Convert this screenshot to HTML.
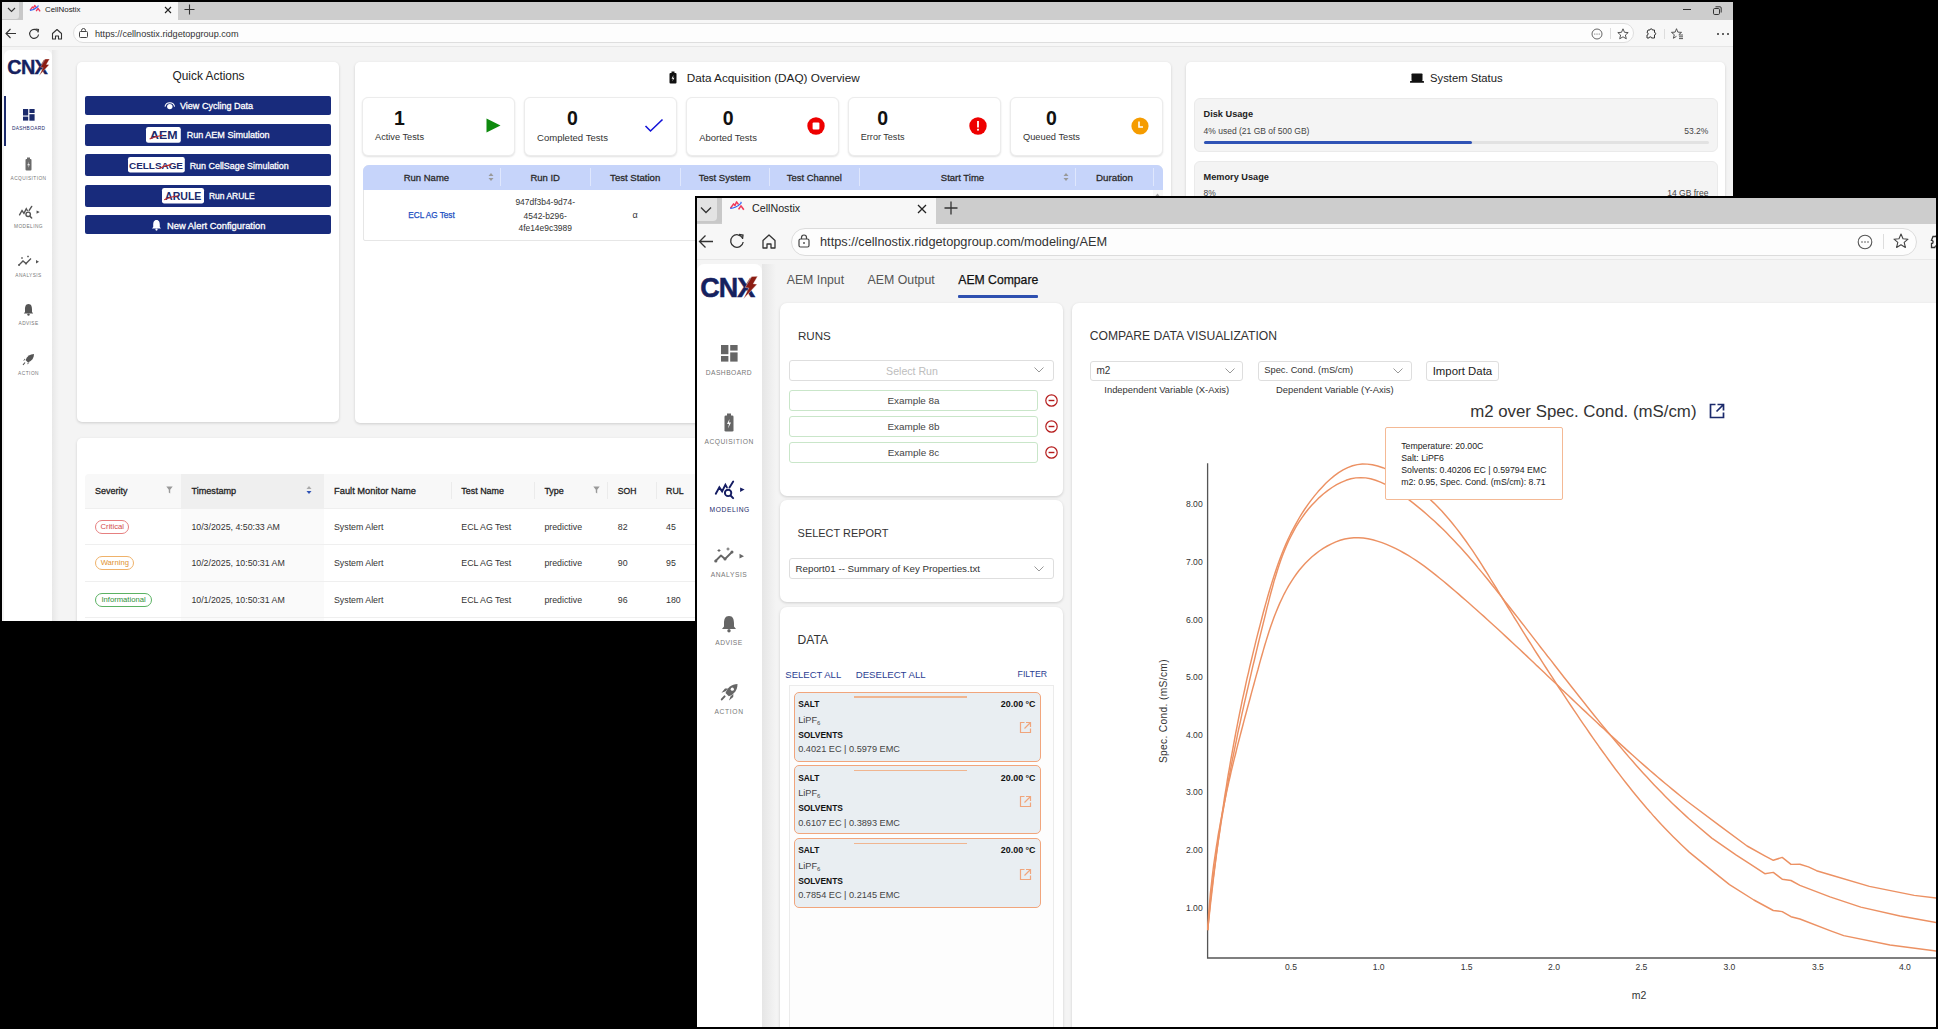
<!DOCTYPE html>
<html><head><meta charset="utf-8">
<style>
*{box-sizing:border-box}
html,body{margin:0;padding:0}
body{width:1938px;height:1029px;background:#000;position:relative;overflow:hidden;font-family:"Liberation Sans",sans-serif;color:#222}
.win{position:absolute;left:0;top:0;width:1938px;height:1029px}
#w1{clip-path:inset(2px 205px 408px 2px)}
#w2o{clip-path:inset(196px 0px 0px 695px)}
#w2{clip-path:inset(198px 2px 2px 697px)}
.a{position:absolute}
.t{position:absolute;white-space:nowrap;line-height:1}
.card{position:absolute;background:#fff;border-radius:5px;box-shadow:0 1px 3px rgba(0,0,0,.16)}
svg{position:absolute;overflow:visible}
</style></head>
<body>
<!-- ================= WINDOW 1 ================= -->
<div class="win" id="w1">
  <div class="a" style="left:0;top:0;width:1938px;height:1029px;background:#f4f4f4"></div>
  <!-- tab bar -->
  <div class="a" style="left:0;top:0;width:1938px;height:20px;background:#cdcdcd"></div>
  <div class="a" style="left:2px;top:2px;width:21px;height:18.5px;background:#c8c8c8;border-radius:0 0 3px 0"></div>
  <div class="a" style="left:2px;top:2px;width:17px;height:16.8px;background:#e3e3e3;border-radius:0 0 3px 0"></div>
  <svg style="left:7px;top:7px" width="9" height="6"><path d="M1 1 L4.5 4.5 L8 1" fill="none" stroke="#333" stroke-width="1.1"/></svg>
  <div class="a" style="left:23px;top:2px;width:155px;height:20px;background:#f7f7f7"></div>
  <svg style="left:29px;top:4px" width="12" height="9" viewBox="0 0 16 12"><path d="M1.5 8.2 L4.6 3.9 L6 5.4 L7.6 1.9 L9.6 4.6" fill="none" stroke="#f03a5a" stroke-width="1.8" stroke-linejoin="round"/><path d="M9.6 9.4 L12 5.9 L14.8 9.8" fill="none" stroke="#f03a5a" stroke-width="1.9" stroke-linejoin="round"/><path d="M1.2 8.4 Q7 8 11.6 3.6 Q12.6 2.3 11.6 2" fill="none" stroke="#2f63f5" stroke-width="1.6"/></svg>
  <div class="t" style="left:45px;top:5.5px;font-size:7.9px;color:#222">CellNostix</div>
  <svg style="left:164px;top:6px" width="8" height="8"><path d="M1 1 L7 7 M7 1 L1 7" stroke="#222" stroke-width="1.1"/></svg>
  <svg style="left:184px;top:4px" width="11" height="11"><path d="M5.5 0.5 V10.5 M0.5 5.5 H10.5" stroke="#333" stroke-width="1.1"/></svg>
  <div class="a" style="left:1683px;top:9px;width:8px;height:1px;background:#333"></div>
  <svg style="left:1713px;top:6px" width="9" height="9"><rect x="0.5" y="2.5" width="6" height="6" rx="1.2" fill="none" stroke="#333" stroke-width="1"/><path d="M2.5 0.8 H7 Q8.2 0.8 8.2 2 V6.5" fill="none" stroke="#333" stroke-width="1"/></svg>
  <!-- address row -->
  <div class="a" style="left:0;top:20px;width:1938px;height:27px;background:#f7f7f7;border-bottom:1px solid #e6e6e6"></div>
  <svg style="left:5px;top:28px" width="12" height="11"><path d="M11 5.5 H1.2 M5.5 1 L1 5.5 L5.5 10" fill="none" stroke="#333" stroke-width="1.1"/></svg>
  <svg style="left:28px;top:28px" width="12" height="12"><path d="M10 3.5 A4.5 4.5 0 1 0 10.6 6.5" fill="none" stroke="#333" stroke-width="1.1"/><path d="M7.5 1 L10.5 1.5 L10 4.5" fill="none" stroke="#333" stroke-width="1.1"/></svg>
  <svg style="left:51px;top:28px" width="12" height="12"><path d="M1.5 11 V5.5 L6 1.5 L10.5 5.5 V11 H7.5 V8 H4.5 V11 Z" fill="none" stroke="#333" stroke-width="1.1" stroke-linejoin="round"/></svg>
  <div class="a" style="left:73px;top:23px;width:1561px;height:20px;background:#fdfdfd;border:1px solid #dedede;border-radius:10px"></div>
  <svg style="left:79px;top:28px" width="9" height="10"><rect x="0.5" y="3.5" width="8" height="6" rx="1" fill="none" stroke="#444" stroke-width="1"/><path d="M2.5 3.5 V2.5 A2 2 0 0 1 6.5 2.5 V3.5" fill="none" stroke="#444" stroke-width="1"/></svg>
  <div class="t" style="left:95px;top:30px;font-size:9.15px;color:#333">https://cellnostix.ridgetopgroup.com</div>
  <svg style="left:1591px;top:28px" width="12" height="12"><circle cx="6" cy="6" r="5" fill="none" stroke="#555" stroke-width="0.9"/><circle cx="3.8" cy="6" r="0.6" fill="#555"/><circle cx="6" cy="6" r="0.6" fill="#555"/><circle cx="8.2" cy="6" r="0.6" fill="#555"/></svg>
  <div class="a" style="left:1610px;top:28px;width:1px;height:11px;background:#ddd"></div>
  <svg style="left:1617px;top:28px" width="12" height="12"><path d="M6 0.8 L7.5 4.3 L11.2 4.6 L8.4 7 L9.3 10.8 L6 8.8 L2.7 10.8 L3.6 7 L0.8 4.6 L4.5 4.3 Z" fill="none" stroke="#444" stroke-width="0.9" stroke-linejoin="round"/></svg>
  <svg style="left:1645px;top:28px" width="12" height="12"><path d="M3 2 H5 A1.2 1.2 0 0 1 7.4 2 H9.5 V4.5 A1.2 1.2 0 0 1 9.5 6.9 V10 H6.5 A1.2 1.2 0 0 0 4.1 10 H2 V7 A1.2 1.2 0 0 0 2 4.6 Z" fill="none" stroke="#333" stroke-width="1"/></svg>
  <div class="a" style="left:1664px;top:29px;width:1px;height:10px;background:#ddd"></div>
  <svg style="left:1671px;top:28px" width="13" height="12"><path d="M7.69 6.71 L10.54 4.36 L6.85 4.14 L5.50 0.70 L4.15 4.14 L0.46 4.36 L3.31 6.71 L2.38 10.29 L5.50 8.30" fill="none" stroke="#444" stroke-width="0.9" stroke-linejoin="round"/><path d="M8 7 H12 M8 8.8 H12 M8 10.6 H12" stroke="#444" stroke-width="0.9"/></svg>
  <svg style="left:1716px;top:32px" width="14" height="4"><circle cx="2" cy="2" r="1" fill="#333"/><circle cx="7" cy="2" r="1" fill="#333"/><circle cx="12" cy="2" r="1" fill="#333"/></svg>

  <!-- W1 CONTENT -->
  
  <!-- sidebar -->
  <div class="a" style="left:52px;top:50px;width:7px;height:600px;background:linear-gradient(90deg,rgba(0,0,0,.05),rgba(0,0,0,0))"></div>
  <div class="a" style="left:4px;top:50px;width:48px;height:600px;background:#fff;border-radius:6px 6px 0 0"></div>
  <svg style="left:7.36px;top:57.5px" width="44.4" height="19.2" viewBox="0 0 60 26"><text x="0.3" y="21.6" font-family="Liberation Sans" font-weight="bold" font-size="26.9" fill="#16215e" stroke="#16215e" stroke-width="0.5" letter-spacing="-0.9">CNX</text><path d="M51.7 1.5 L57.6 1.3 L53.3 8.8 L57.1 9.2 L43.4 23.9 L48.8 13.1 L45.2 12.4 Z" fill="#8c1d12" stroke="#fff" stroke-width="0.4"/></svg>
  <div class="a" style="left:4px;top:96px;width:1.5px;height:50px;background:#1b2a6b"></div>
  <svg style="left:23px;top:109px" width="12" height="12"><rect x="0" y="0" width="5.2" height="6.5" fill="#1b2a6b"/><rect x="6.4" y="0" width="5.2" height="4" fill="#1b2a6b"/><rect x="0" y="7.6" width="5.2" height="4" fill="#1b2a6b"/><rect x="6.4" y="5.2" width="5.2" height="6.5" fill="#1b2a6b"/></svg>
  <div class="t" style="left:12.0px;top:127.2px;font-size:4.8px;letter-spacing:0.32px;color:#1b2a6b">DASHBOARD</div>
  <svg style="left:25px;top:157px" width="7" height="14"><rect x="0.5" y="2" width="6" height="11.5" rx="1" fill="#6a6a6a"/><rect x="2" y="0.5" width="3" height="2" fill="#6a6a6a"/><path d="M4 4.5 L2.3 8.3 H3.8 L3 11 L4.9 7.3 H3.4 Z" fill="#fff"/></svg>
  <div class="t" style="left:10.6px;top:176.9px;font-size:4.8px;letter-spacing:0.43px;color:#777">ACQUISITION</div>
  <svg style="left:17.5px;top:205.5px" width="23" height="14" viewBox="0 0 32 20"><path d="M1.8 12.7 L5.35 6.4 L8.1 10.4 L11.4 3.8 L12.9 6.4 M15.5 6.4 L19.2 0.6" fill="none" stroke="#555" stroke-width="2" stroke-linecap="round"/><circle cx="14.1" cy="11.9" r="3.2" fill="none" stroke="#555" stroke-width="2"/><path d="M16.8 14.8 L19.1 17.1" stroke="#555" stroke-width="2.1" stroke-linecap="round"/><path d="M26.1 6.4 L30.6 8.6 L26.1 10.9 Z" fill="#555"/></svg>
  <div class="t" style="left:14.0px;top:225.4px;font-size:4.8px;letter-spacing:0.43px;color:#777">MODELING</div>
  <svg style="left:18px;top:255px" width="22" height="12"><path d="M1 10 L5 6 L8 8.5 L13 3.5" fill="none" stroke="#555" stroke-width="1.3"/><circle cx="1" cy="10" r="1" fill="#555"/><circle cx="8" cy="8.5" r="1" fill="#555"/><path d="M4 2 V4 M3 3 H5 M10 0.5 V2.5 M9 1.5 H11" stroke="#555" stroke-width=".7"/><path d="M18 5 L21 6.7 L18 8.4 Z" fill="#555"/></svg>
  <div class="t" style="left:15.3px;top:273.8px;font-size:4.8px;letter-spacing:0.41px;color:#777">ANALYSIS</div>
  <svg style="left:23px;top:303px" width="11" height="13"><path d="M5.5 1 C2.5 1 2 4 2 6.5 V9 L0.8 10.5 H10.2 L9 9 V6.5 C9 4 8.5 1 5.5 1 Z" fill="#555"/><circle cx="5.5" cy="11.6" r="1.2" fill="#555"/></svg>
  <div class="t" style="left:18.6px;top:322.3px;font-size:4.8px;letter-spacing:0.38px;color:#777">ADVISE</div>
  <svg style="left:22px;top:353px" width="13" height="13"><path d="M12 1 C8 1 5 3 3.5 7 L6 9.5 C10 8 12 5 12 1 Z" fill="#555"/><path d="M3 7 L1 8 L3 5.5 Z M6 9.5 L5 11.5 L7.5 9.8 Z" fill="#555"/><path d="M3 9.5 L1 12" stroke="#555" stroke-width="1.2"/></svg>
  <div class="t" style="left:18.0px;top:372.1px;font-size:4.8px;letter-spacing:0.49px;color:#777">ACTION</div>

  <!-- Quick actions card -->
  <div class="card" style="left:77px;top:62px;width:262px;height:360px"></div>
  <div class="t" style="left:172.5px;top:71.3px;font-size:11.9px;color:#222">Quick Actions</div>
  <div class="a" style="left:85px;top:96px;width:246px;height:19px;background:#182b7c;border-radius:2px"></div>
  <svg style="left:164px;top:101px" width="12" height="10"><path d="M1 5.6 A4.9 4.9 0 0 1 10.6 5.6" fill="none" stroke="#fff" stroke-width="1.1"/><circle cx="5.8" cy="5.6" r="2.7" fill="#fff"/></svg>
  <div class="t" style="left:180px;top:102.2px;font-size:9.02px;color:#fff;-webkit-text-stroke:0.3px #fff">View Cycling Data</div>
  <div class="a" style="left:85px;top:124px;width:246px;height:21.5px;background:#182b7c;border-radius:2px"></div>
  <svg style="left:146.2px;top:127px" width="34.8" height="15.7"><rect x="0" y="0" width="34.8" height="15.7" rx="2.2" fill="#fff"/><text x="4" y="12.1" font-family="Liberation Sans" font-weight="bold" font-size="11.2" fill="#1b2a6b" textLength="27.5" lengthAdjust="spacingAndGlyphs">AEM</text><path d="M3.6 12 Q9 9.2 17 8.2" fill="none" stroke="#c22a2a" stroke-width="1.1"/></svg>
  <div class="t" style="left:186.7px;top:131.2px;font-size:9.05px;color:#fff;-webkit-text-stroke:0.3px #fff">Run AEM Simulation</div>
  <div class="a" style="left:85px;top:154.4px;width:246px;height:21.8px;background:#182b7c;border-radius:2px"></div>
  <svg style="left:127.7px;top:157.4px" width="56.8" height="15.5"><rect x="0" y="0" width="56.8" height="15.5" rx="2.2" fill="#fff"/><text x="1" y="11.6" font-family="Liberation Sans" font-weight="bold" font-size="9.6" fill="#1b2a6b" textLength="54" lengthAdjust="spacingAndGlyphs">CELLSAGE</text><path d="M31 11.6 Q36 8.6 43.5 7.6" fill="none" stroke="#c22a2a" stroke-width="1.1"/></svg>
  <div class="t" style="left:189.7px;top:161.6px;font-size:8.91px;color:#fff;-webkit-text-stroke:0.3px #fff">Run CellSage Simulation</div>
  <div class="a" style="left:85px;top:185px;width:246px;height:21.5px;background:#182b7c;border-radius:2px"></div>
  <svg style="left:162px;top:188.2px" width="42" height="15.4"><rect x="0" y="0" width="42" height="15.4" rx="2.2" fill="#fff"/><text x="3" y="11.8" font-family="Liberation Sans" font-weight="bold" font-size="10.8" fill="#1b2a6b" textLength="36.4" lengthAdjust="spacingAndGlyphs">ARULE</text><path d="M2.2 11.8 Q8 8.8 16 7.8" fill="none" stroke="#c22a2a" stroke-width="1.1"/></svg>
  <div class="t" style="left:209px;top:192.0px;font-size:8.46px;color:#fff;-webkit-text-stroke:0.3px #fff">Run ARULE</div>
  <div class="a" style="left:85px;top:215.3px;width:246px;height:19.2px;background:#182b7c;border-radius:2px"></div>
  <svg style="left:151px;top:219px" width="11" height="12"><path d="M5.5 1 C2.8 1 2.2 3.5 2.2 6 V8 L1 9.5 H10 L8.8 8 V6 C8.8 3.5 8.2 1 5.5 1 Z" fill="#fff"/><circle cx="5.5" cy="10.6" r="1.1" fill="#fff"/></svg>
  <div class="t" style="left:167px;top:221.3px;font-size:9.4px;color:#fff;-webkit-text-stroke:0.3px #fff">New Alert Configuration</div>

  <!-- DAQ card -->
  <div class="card" style="left:354.5px;top:62px;width:816.5px;height:361px"></div>
  <svg style="left:669px;top:71px" width="8" height="13"><rect x="0.5" y="2" width="7" height="10.5" rx="1" fill="#111"/><rect x="2.5" y="0.5" width="3" height="2" fill="#111"/><path d="M4.5 4 L2.6 7.8 H4 L3.3 10.5 L5.4 6.7 H4 Z" fill="#fff"/></svg>
  <div class="t" style="left:686.7px;top:71.5px;font-size:11.75px;color:#222">Data Acquisition (DAQ) Overview</div>

  <div class="a" style="left:362px;top:97px;width:153.0px;height:59.4px;background:#fff;border:1px solid #ececec;border-radius:6px;box-shadow:0 1px 2px rgba(0,0,0,.12)"></div>
  <div class="t" style="left:359.5px;width:80px;text-align:center;top:109px;font-size:19.5px;font-weight:bold;color:#111">1</div>
  <div class="t" style="left:375.0px;top:133px;font-size:9.22px;color:#333">Active Tests</div>
  <svg style="left:486px;top:118px" width="15" height="15"><path d="M0.5 0.5 L14.5 7.5 L0.5 14.5 Z" fill="#0e8a0e"/></svg>
  <div class="a" style="left:524px;top:97px;width:153.3px;height:59.4px;background:#fff;border:1px solid #ececec;border-radius:6px;box-shadow:0 1px 2px rgba(0,0,0,.12)"></div>
  <div class="t" style="left:532.5px;width:80px;text-align:center;top:109px;font-size:19.5px;font-weight:bold;color:#111">0</div>
  <div class="t" style="left:537.0px;top:133px;font-size:9.56px;color:#333">Completed Tests</div>
  <svg style="left:644px;top:118px" width="20" height="15"><path d="M1.5 8 L6.5 13 L18.5 1.5" fill="none" stroke="#1212d8" stroke-width="1.6"/></svg>
  <div class="a" style="left:686.2px;top:97px;width:153.0px;height:59.4px;background:#fff;border:1px solid #ececec;border-radius:6px;box-shadow:0 1px 2px rgba(0,0,0,.12)"></div>
  <div class="t" style="left:688.1px;width:80px;text-align:center;top:109px;font-size:19.5px;font-weight:bold;color:#111">0</div>
  <div class="t" style="left:699.2px;top:133px;font-size:9.48px;color:#333">Aborted Tests</div>
  <svg style="left:807.0px;top:117px" width="18" height="18"><circle cx="9" cy="9" r="8.7" fill="#ee0000"/><rect x="5.6" y="5.6" width="6.8" height="6.8" rx="1" fill="#fff"/></svg>
  <div class="a" style="left:847.8px;top:97px;width:153.2px;height:59.4px;background:#fff;border:1px solid #ececec;border-radius:6px;box-shadow:0 1px 2px rgba(0,0,0,.12)"></div>
  <div class="t" style="left:842.6px;width:80px;text-align:center;top:109px;font-size:19.5px;font-weight:bold;color:#111">0</div>
  <div class="t" style="left:860.8px;top:133px;font-size:9.07px;color:#333">Error Tests</div>
  <svg style="left:968.6px;top:117px" width="18" height="18"><circle cx="9" cy="9" r="8.7" fill="#ee0000"/><rect x="8.1" y="4" width="1.8" height="6.5" fill="#fff"/><rect x="8.1" y="11.8" width="1.8" height="1.8" fill="#fff"/></svg>
  <div class="a" style="left:1010px;top:97px;width:152.8px;height:59.4px;background:#fff;border:1px solid #ececec;border-radius:6px;box-shadow:0 1px 2px rgba(0,0,0,.12)"></div>
  <div class="t" style="left:1011.5px;width:80px;text-align:center;top:109px;font-size:19.5px;font-weight:bold;color:#111">0</div>
  <div class="t" style="left:1023.0px;top:133px;font-size:9.28px;color:#333">Queued Tests</div>
  <svg style="left:1131px;top:117px" width="18" height="18"><circle cx="9" cy="9" r="8.6" fill="#f59c00"/><path d="M8 4.5 V10 H12" fill="none" stroke="#fff" stroke-width="1.6"/></svg>

  <!-- DAQ table -->
  <div class="a" style="left:363px;top:164.5px;width:799.5px;height:76px;background:#fff;border:1px solid #e6e6e6;border-radius:6px 6px 2px 2px"></div>
  <div class="a" style="left:363px;top:164.5px;width:799.5px;height:25px;background:#c6d4fa;border-radius:6px 6px 0 0"></div>
  <div class="a" style="left:499.7px;top:168px;width:1px;height:18px;background:#dfe7fd"></div>
  <div class="a" style="left:589.7px;top:168px;width:1px;height:18px;background:#dfe7fd"></div>
  <div class="a" style="left:679.7px;top:168px;width:1px;height:18px;background:#dfe7fd"></div>
  <div class="a" style="left:769.3px;top:168px;width:1px;height:18px;background:#dfe7fd"></div>
  <div class="a" style="left:859px;top:168px;width:1px;height:18px;background:#dfe7fd"></div>
  <div class="a" style="left:1075.4px;top:168px;width:1px;height:18px;background:#dfe7fd"></div>
  <div class="a" style="left:1152.5px;top:168px;width:1px;height:18px;background:#dfe7fd"></div>
  <div class="t" style="left:376.4px;width:100px;text-align:center;top:173.1px;font-size:9.52px;color:#2a2a2a;-webkit-text-stroke:0.28px currentColor">Run Name</div>
  <div class="t" style="left:495.2px;width:100px;text-align:center;top:173.1px;font-size:9.52px;color:#2a2a2a;-webkit-text-stroke:0.28px currentColor">Run ID</div>
  <div class="t" style="left:585.2px;width:100px;text-align:center;top:173.1px;font-size:9.61px;color:#2a2a2a;-webkit-text-stroke:0.28px currentColor">Test Station</div>
  <div class="t" style="left:674.7px;width:100px;text-align:center;top:173.1px;font-size:9.50px;color:#2a2a2a;-webkit-text-stroke:0.28px currentColor">Test System</div>
  <div class="t" style="left:764.4px;width:100px;text-align:center;top:173.1px;font-size:9.45px;color:#2a2a2a;-webkit-text-stroke:0.28px currentColor">Test Channel</div>
  <div class="t" style="left:912.5px;width:100px;text-align:center;top:173.1px;font-size:9.51px;color:#2a2a2a;-webkit-text-stroke:0.28px currentColor">Start Time</div>
  <div class="t" style="left:1064.5px;width:100px;text-align:center;top:173.1px;font-size:9.79px;color:#2a2a2a;-webkit-text-stroke:0.28px currentColor">Duration</div>
  <svg style="left:488px;top:172px" width="6" height="10"><path d="M0.5 4 L3 1 L5.5 4 Z M0.5 6 L3 9 L5.5 6 Z" fill="#999"/></svg>
  <svg style="left:1063px;top:172px" width="6" height="10"><path d="M0.5 4 L3 1 L5.5 4 Z M0.5 6 L3 9 L5.5 6 Z" fill="#999"/></svg>
  <div class="t" style="left:381.5px;width:100px;text-align:center;top:212px;font-size:8.2px;color:#1c4fc2;-webkit-text-stroke:0.25px #1c4fc2">ECL AG Test</div>
  <div class="t" style="left:495.2px;width:100px;text-align:center;top:198px;font-size:8.45px;color:#333">947df3b4-9d74-</div>
  <div class="t" style="left:495.2px;width:100px;text-align:center;top:211.5px;font-size:8.45px;color:#333">4542-b296-</div>
  <div class="t" style="left:495.2px;width:100px;text-align:center;top:224.3px;font-size:8.45px;color:#333">4fe14e9c3989</div>
  <div class="t" style="left:585.2px;width:100px;text-align:center;top:211px;font-size:9px;color:#333">α</div>
  <div class="a" style="left:1152.5px;top:189.5px;width:10px;height:50px;background:#f7f7f7"></div>
  <svg style="left:1155px;top:193px" width="5" height="4"><path d="M0 3.5 L2.5 0.5 L5 3.5 Z" fill="#aaa"/></svg>

  <!-- System status -->
  <div class="card" style="left:1186px;top:61.5px;width:539px;height:600px"></div>
  <svg style="left:1410px;top:73px" width="14" height="10"><rect x="1.5" y="0.5" width="11" height="7.5" rx="0.8" fill="#111"/><rect x="0" y="8" width="14" height="1.8" rx="0.6" fill="#111"/></svg>
  <div class="t" style="left:1430px;top:72.5px;font-size:11.26px;color:#222">System Status</div>
  <div class="a" style="left:1193.8px;top:98.3px;width:524px;height:54.2px;background:#f4f4f4;border:1px solid #eaeaea;border-radius:6px"></div>
  <div class="t" style="left:1203.6px;top:110px;font-size:9.18px;font-weight:bold;color:#222">Disk Usage</div>
  <div class="t" style="left:1203.6px;top:127px;font-size:8.5px;color:#444">4% used (21 GB of 500 GB)</div>
  <div class="t" style="left:1608.4px;width:100px;text-align:right;top:127px;font-size:8.5px;color:#444">53.2%</div>
  <div class="a" style="left:1203.6px;top:141px;width:505px;height:2.6px;background:#e2e2e2;border-radius:2px"></div>
  <div class="a" style="left:1203.6px;top:141px;width:268.5px;height:2.6px;background:#2f53b5;border-radius:2px"></div>
  <div class="a" style="left:1193.8px;top:160.5px;width:524px;height:60px;background:#f4f4f4;border:1px solid #eaeaea;border-radius:6px"></div>
  <div class="t" style="left:1203.6px;top:172.8px;font-size:9.18px;font-weight:bold;color:#222">Memory Usage</div>
  <div class="t" style="left:1203.6px;top:189px;font-size:8.5px;color:#444">8%</div>
  <div class="t" style="left:1608.4px;width:100px;text-align:right;top:189px;font-size:8.5px;color:#444">14 GB free</div>

  <!-- Alerts card -->
  <div class="card" style="left:77px;top:437.6px;width:1648px;height:400px"></div>
  <div class="a" style="left:85px;top:473.7px;width:1632px;height:34px;background:#f8f8f8;border-radius:4px 4px 0 0"></div>
  <div class="a" style="left:181px;top:473.7px;width:142.7px;height:34px;background:#efefef"></div>
  <div class="a" style="left:181px;top:507.7px;width:142.7px;height:120px;background:#fafafa"></div>
  <div class="a" style="left:85px;top:507.7px;width:1632px;height:1px;background:#efefef"></div>
  <div class="a" style="left:85px;top:544.3px;width:1632px;height:1px;background:#efefef"></div>
  <div class="a" style="left:85px;top:580.6px;width:1632px;height:1px;background:#efefef"></div>
  <div class="a" style="left:85px;top:617px;width:1632px;height:1px;background:#efefef"></div>
  <div class="a" style="left:450.8px;top:482px;width:1px;height:17px;background:#ebebeb"></div>
  <div class="a" style="left:533.5px;top:482px;width:1px;height:17px;background:#ebebeb"></div>
  <div class="a" style="left:607.2px;top:482px;width:1px;height:17px;background:#ebebeb"></div>
  <div class="a" style="left:655.6px;top:482px;width:1px;height:17px;background:#ebebeb"></div>
  <div class="t" style="left:95.1px;top:487.2px;font-size:8.97px;color:#222;-webkit-text-stroke:0.28px currentColor">Severity</div>
  <div class="t" style="left:191.4px;top:487.2px;font-size:9.13px;color:#222;-webkit-text-stroke:0.28px currentColor">Timestamp</div>
  <div class="t" style="left:334px;top:487.2px;font-size:9.34px;color:#222;-webkit-text-stroke:0.28px currentColor">Fault Monitor Name</div>
  <div class="t" style="left:461.3px;top:487.2px;font-size:8.94px;color:#222;-webkit-text-stroke:0.28px currentColor">Test Name</div>
  <div class="t" style="left:544.4px;top:487.2px;font-size:8.96px;color:#222;-webkit-text-stroke:0.28px currentColor">Type</div>
  <div class="t" style="left:617.8px;top:487.2px;font-size:8.60px;color:#222;-webkit-text-stroke:0.28px currentColor">SOH</div>
  <div class="t" style="left:666px;top:487.2px;font-size:8.84px;color:#222;-webkit-text-stroke:0.28px currentColor">RUL</div>
  <svg style="left:166.0px;top:486px" width="7" height="8"><path d="M0.3 0.5 H6.7 L4.2 3.8 V7.5 L2.8 6.5 V3.8 Z" fill="#999"/></svg>
  <svg style="left:592.8px;top:486px" width="7" height="8"><path d="M0.3 0.5 H6.7 L4.2 3.8 V7.5 L2.8 6.5 V3.8 Z" fill="#999"/></svg>
  <svg style="left:306.4px;top:485px" width="6" height="10"><path d="M0.5 4 L3 1 L5.5 4 Z" fill="#aaa"/><path d="M0.5 6 L3 9 L5.5 6 Z" fill="#2f53b5"/></svg>
  <div class="t" style="left:95.1px;top:519.7px;width:34.4px;height:14.2px;border:1px solid #e68080;border-radius:7px;color:#d24a4a;font-size:7.66px;line-height:12.2px;text-align:center">Critical</div>
  <div class="t" style="left:191.4px;top:523.1px;font-size:8.8px;color:#333">10/3/2025, 4:50:33 AM</div>
  <div class="t" style="left:334px;top:523.1px;font-size:8.8px;color:#333">System Alert</div>
  <div class="t" style="left:461.3px;top:523.1px;font-size:8.8px;color:#333">ECL AG Test</div>
  <div class="t" style="left:544.4px;top:523.1px;font-size:8.8px;color:#333">predictive</div>
  <div class="t" style="left:617.8px;top:523.1px;font-size:8.8px;color:#333">82</div>
  <div class="t" style="left:666px;top:523.1px;font-size:8.8px;color:#333">45</div>
  <div class="t" style="left:95.1px;top:556.0px;width:39.4px;height:14.2px;border:1px solid #efb26a;border-radius:7px;color:#e0922e;font-size:7.66px;line-height:12.2px;text-align:center">Warning</div>
  <div class="t" style="left:191.4px;top:559.4px;font-size:8.8px;color:#333">10/2/2025, 10:50:31 AM</div>
  <div class="t" style="left:334px;top:559.4px;font-size:8.8px;color:#333">System Alert</div>
  <div class="t" style="left:461.3px;top:559.4px;font-size:8.8px;color:#333">ECL AG Test</div>
  <div class="t" style="left:544.4px;top:559.4px;font-size:8.8px;color:#333">predictive</div>
  <div class="t" style="left:617.8px;top:559.4px;font-size:8.8px;color:#333">90</div>
  <div class="t" style="left:666px;top:559.4px;font-size:8.8px;color:#333">95</div>
  <div class="t" style="left:95.1px;top:592.5px;width:56.9px;height:14.2px;border:1px solid #5bb263;border-radius:7px;color:#2f8f3a;font-size:7.66px;line-height:12.2px;text-align:center">Informational</div>
  <div class="t" style="left:191.4px;top:595.9px;font-size:8.8px;color:#333">10/1/2025, 10:50:31 AM</div>
  <div class="t" style="left:334px;top:595.9px;font-size:8.8px;color:#333">System Alert</div>
  <div class="t" style="left:461.3px;top:595.9px;font-size:8.8px;color:#333">ECL AG Test</div>
  <div class="t" style="left:544.4px;top:595.9px;font-size:8.8px;color:#333">predictive</div>
  <div class="t" style="left:617.8px;top:595.9px;font-size:8.8px;color:#333">96</div>
  <div class="t" style="left:666px;top:595.9px;font-size:8.8px;color:#333">180</div>
  <div id="w1c"></div>
</div>

<!-- ================= WINDOW 2 ================= -->
<div class="win" id="w2o"><div class="a" style="left:0;top:0;width:1938px;height:1029px;background:#000"></div>
<div class="win" id="w2">
  <div class="a" style="left:0;top:0;width:1938px;height:1029px;background:#f4f4f4"></div>
  <div class="a" style="left:0;top:198px;width:1938px;height:26px;background:#cdcdcd"></div>
  <div class="a" style="left:697px;top:198px;width:25.7px;height:25.2px;background:#c8c8c8;border-radius:0 0 4px 0"></div>
  <div class="a" style="left:697px;top:198px;width:20.3px;height:22.7px;background:#e3e3e3;border-radius:0 0 4px 0"></div>
  <svg style="left:700px;top:206px" width="12" height="8"><path d="M1 1.5 L6 6.5 L11 1.5" fill="none" stroke="#333" stroke-width="1.3"/></svg>
  <div class="a" style="left:722px;top:198px;width:214px;height:27px;background:#f7f7f7"></div>
  <svg style="left:729px;top:200px" width="16" height="12"><path d="M1.5 8.2 L4.6 3.9 L6 5.4 L7.6 1.9 L9.6 4.6" fill="none" stroke="#f03a5a" stroke-width="1.5" stroke-linejoin="round"/><path d="M9.6 9.4 L12 5.9 L14.8 9.8" fill="none" stroke="#f03a5a" stroke-width="1.6" stroke-linejoin="round"/><path d="M1.2 8.4 Q7 8 11.6 3.6 Q12.6 2.3 11.6 2" fill="none" stroke="#2f63f5" stroke-width="1.3"/></svg>
  <div class="t" style="left:752px;top:203.3px;font-size:10.7px;color:#222">CellNostix</div>
  <svg style="left:917px;top:204px" width="10" height="10"><path d="M1 1 L9 9 M9 1 L1 9" stroke="#222" stroke-width="1.3"/></svg>
  <svg style="left:944px;top:201px" width="14" height="14"><path d="M7 0.5 V13.5 M0.5 7 H13.5" stroke="#333" stroke-width="1.3"/></svg>
  <div class="a" style="left:0;top:224px;width:1938px;height:35.5px;background:#f7f7f7;border-bottom:1px solid #e8e8e8"></div>
  <svg style="left:698px;top:234px" width="16" height="15"><path d="M15 7.5 H1.5 M7.5 1.5 L1.5 7.5 L7.5 13.5" fill="none" stroke="#333" stroke-width="1.3"/></svg>
  <svg style="left:729px;top:233px" width="16" height="16"><path d="M13.5 5 A6.3 6.3 0 1 0 14.2 9" fill="none" stroke="#333" stroke-width="1.3"/><path d="M10 1.5 L14 2 L13.5 6" fill="none" stroke="#333" stroke-width="1.3"/></svg>
  <svg style="left:761px;top:233px" width="16" height="16"><path d="M2 15 V7.5 L8 2 L14 7.5 V15 H10 V11 H6 V15 Z" fill="none" stroke="#333" stroke-width="1.3" stroke-linejoin="round"/></svg>
  <div class="a" style="left:790.5px;top:228px;width:1126.5px;height:27.8px;background:#fdfdfd;border:1px solid #dcdcdc;border-radius:14px"></div>
  <svg style="left:798px;top:234px" width="12" height="14"><rect x="1" y="5" width="10" height="8" rx="1.5" fill="none" stroke="#444" stroke-width="1.2"/><path d="M3.5 5 V3.5 A2.5 2.5 0 0 1 8.5 3.5 V5" fill="none" stroke="#444" stroke-width="1.2"/><circle cx="6" cy="9" r="0.9" fill="#444"/></svg>
  <div class="t" style="left:820px;top:235.8px;font-size:12.75px;color:#333">https://cellnostix.ridgetopgroup.com/modeling/AEM</div>
  <svg style="left:1857px;top:234px" width="16" height="16"><circle cx="8" cy="8" r="6.8" fill="none" stroke="#555" stroke-width="1.1"/><circle cx="5" cy="8" r="0.8" fill="#555"/><circle cx="8" cy="8" r="0.8" fill="#555"/><circle cx="11" cy="8" r="0.8" fill="#555"/></svg>
  <div class="a" style="left:1883px;top:234px;width:1px;height:15px;background:#ddd"></div>
  <svg style="left:1893px;top:233px" width="16" height="16"><path d="M8 1 L10 5.8 L15 6.2 L11.2 9.4 L12.4 14.5 L8 11.8 L3.6 14.5 L4.8 9.4 L1 6.2 L6 5.8 Z" fill="none" stroke="#444" stroke-width="1.1" stroke-linejoin="round"/></svg>

  <svg style="left:1929px;top:234px" width="16" height="16"><path d="M4 2.5 H7 A1.6 1.6 0 0 1 10.2 2.5 H13 V6 A1.6 1.6 0 0 1 13 9.2 V13.5 H9 A1.6 1.6 0 0 0 5.8 13.5 H2.5 V9.5 A1.6 1.6 0 0 0 2.5 6.3 Z" fill="none" stroke="#333" stroke-width="1.3"/></svg>
  <!-- W2 CONTENT -->

  <!-- sidebar -->
  <div class="a" style="left:762px;top:263.6px;width:14px;height:800px;background:linear-gradient(90deg,rgba(0,0,0,.06),rgba(0,0,0,.0))"></div>
  <div class="a" style="left:697px;top:263.6px;width:65px;height:800px;background:#fff;border-radius:7px 7px 0 0"></div>
  <svg style="left:700px;top:275px" width="60" height="26" viewBox="0 0 60 26"><text x="0.3" y="21.6" font-family="Liberation Sans" font-weight="bold" font-size="26.9" fill="#16215e" stroke="#16215e" stroke-width="0.5" letter-spacing="-0.9">CNX</text><path d="M51.7 1.5 L57.6 1.3 L53.3 8.8 L57.1 9.2 L43.4 23.9 L48.8 13.1 L45.2 12.4 Z" fill="#8c1d12" stroke="#fff" stroke-width="0.4"/></svg>
  <svg style="left:720.6px;top:345px" width="17" height="17"><rect x="0" y="0" width="7.4" height="9.2" fill="#666"/><rect x="9.2" y="0" width="7.4" height="5.6" fill="#666"/><rect x="0" y="11" width="7.4" height="5.6" fill="#666"/><rect x="9.2" y="7.4" width="7.4" height="9.2" fill="#666"/></svg>
  <div class="t" style="left:705.8px;top:370.3px;font-size:6.7px;letter-spacing:0.44px;color:#777">DASHBOARD</div>
  <svg style="left:724px;top:412.5px" width="10" height="19"><rect x="0.5" y="2.5" width="9" height="16" rx="1.3" fill="#666"/><rect x="3" y="0.5" width="4" height="2.5" fill="#666"/><path d="M5.5 6 L3 11 H5 L4 15.5 L7 9.5 H5 Z" fill="#fff"/></svg>
  <div class="t" style="left:704.4px;top:438.8px;font-size:6.7px;letter-spacing:0.54px;color:#777">ACQUISITION</div>
  <svg style="left:714px;top:481px" width="32" height="20"><path d="M1.8 12.7 L5.35 6.4 L8.1 10.4 L11.4 3.8 L12.9 6.4 M15.5 6.4 L19.2 0.6" fill="none" stroke="#141c62" stroke-width="1.9" stroke-linecap="round" stroke-linejoin="miter"/><circle cx="14.1" cy="11.9" r="3.2" fill="none" stroke="#141c62" stroke-width="1.9"/><path d="M16.8 14.8 L19.1 17.1" stroke="#141c62" stroke-width="2" stroke-linecap="round"/><path d="M26.1 6.4 L30.6 8.6 L26.1 10.9 Z" fill="#141c62"/></svg>
  <div class="t" style="left:709.6px;top:506.5px;font-size:6.7px;letter-spacing:0.57px;color:#1b2a6b">MODELING</div>
  <svg style="left:714px;top:547px" width="32" height="17"><path d="M1.5 14 L7 8.5 L11 12 L18 5" fill="none" stroke="#666" stroke-width="1.8" stroke-linejoin="round"/><circle cx="1.8" cy="14" r="1.6" fill="#666"/><circle cx="11" cy="12" r="1.5" fill="#666"/><circle cx="18" cy="5" r="1.5" fill="#666"/><path d="M5 2 V5 M3.5 3.5 H6.5 M14 0.5 V3.5 M12.5 2 H15.5" stroke="#666" stroke-width="1"/><path d="M25.5 6.8 L30 9.2 L25.5 11.6 Z" fill="#666"/></svg>
  <div class="t" style="left:710.7px;top:572.3px;font-size:6.7px;letter-spacing:0.56px;color:#777">ANALYSIS</div>
  <svg style="left:721px;top:614.5px" width="16" height="18"><path d="M8 1 C4 1 3 4.5 3 8.5 V11.5 L1 14 H15 L13 11.5 V8.5 C13 4.5 12 1 8 1 Z" fill="#666"/><circle cx="8" cy="15.8" r="1.7" fill="#666"/></svg>
  <div class="t" style="left:715.3px;top:640.0px;font-size:6.7px;letter-spacing:0.48px;color:#777">ADVISE</div>
  <svg style="left:719.5px;top:682.5px" width="19" height="19"><path d="M17.5 1 C11.5 1 7.5 4.5 5.5 10 L8.8 13.3 C14.3 11.3 17.5 7 17.5 1 Z" fill="#666"/><path d="M5.6 8.2 L1.5 9.8 L5 5.6 L8 5.4 Z M10.6 13.2 L9 17.5 L13.2 14 L13.4 11 Z" fill="#666"/><path d="M4.6 13.4 L1.8 16.4" stroke="#666" stroke-width="2" stroke-linecap="round"/><circle cx="12.3" cy="6.2" r="1.6" fill="#fff"/></svg>
  <div class="t" style="left:714.5px;top:708.8px;font-size:6.7px;letter-spacing:0.66px;color:#777">ACTION</div>

  <!-- tabs -->
  <div class="t" style="left:786.7px;top:274.3px;font-size:12.3px;color:#555">AEM Input</div>
  <div class="t" style="left:867.5px;top:274.3px;font-size:12.35px;color:#555">AEM Output</div>
  <div class="t" style="left:958.3px;top:274.3px;font-size:12.2px;color:#111;-webkit-text-stroke:0.25px #111">AEM Compare</div>
  <div class="a" style="left:958.3px;top:295px;width:80px;height:3px;background:#2e50b0;border-radius:1px"></div>

  <!-- RUNS card -->
  <div class="card" style="left:780px;top:303px;width:283px;height:192.5px;border-radius:7px"></div>
  <div class="t" style="left:797.9px;top:330px;font-size:11.6px;color:#333">RUNS</div>
  <div class="a" style="left:789.3px;top:360.4px;width:264.6px;height:20.3px;border:1px solid #dedede;border-radius:3px;background:#fff"></div>
  <div class="t" style="left:862px;width:100px;text-align:center;top:365.9px;font-size:10.6px;color:#bdbdbd">Select Run</div>
  <svg style="left:1034px;top:367px" width="10" height="6"><path d="M0.5 0.5 L5 5 L9.5 0.5" fill="none" stroke="#999" stroke-width="1"/></svg>
  <div class="a" style="left:789.3px;top:390.2px;width:248.3px;height:21.0px;border:1px solid #c9e6c9;border-radius:3px;background:#fff"></div>
  <div class="t" style="left:863.5px;width:100px;text-align:center;top:396.2px;font-size:9.9px;color:#444">Example 8a</div>
  <svg style="left:1044.8px;top:394.2px" width="13" height="13"><circle cx="6.5" cy="6.5" r="5.7" fill="none" stroke="#b51c1c" stroke-width="1.2"/><path d="M3.6 6.5 H9.4" stroke="#b51c1c" stroke-width="1.4"/></svg>
  <div class="a" style="left:789.3px;top:416.1px;width:248.3px;height:21.4px;border:1px solid #c9e6c9;border-radius:3px;background:#fff"></div>
  <div class="t" style="left:863.5px;width:100px;text-align:center;top:422.3px;font-size:9.9px;color:#444">Example 8b</div>
  <svg style="left:1044.8px;top:420.3px" width="13" height="13"><circle cx="6.5" cy="6.5" r="5.7" fill="none" stroke="#b51c1c" stroke-width="1.2"/><path d="M3.6 6.5 H9.4" stroke="#b51c1c" stroke-width="1.4"/></svg>
  <div class="a" style="left:789.3px;top:442.4px;width:248.3px;height:21.0px;border:1px solid #c9e6c9;border-radius:3px;background:#fff"></div>
  <div class="t" style="left:863.5px;width:100px;text-align:center;top:448.4px;font-size:9.9px;color:#444">Example 8c</div>
  <svg style="left:1044.8px;top:446.4px" width="13" height="13"><circle cx="6.5" cy="6.5" r="5.7" fill="none" stroke="#b51c1c" stroke-width="1.2"/><path d="M3.6 6.5 H9.4" stroke="#b51c1c" stroke-width="1.4"/></svg>

  <!-- SELECT REPORT card -->
  <div class="card" style="left:780px;top:500.2px;width:283px;height:101.6px;border-radius:7px"></div>
  <div class="t" style="left:797.6px;top:528.1px;font-size:10.94px;color:#333">SELECT REPORT</div>
  <div class="a" style="left:789.4px;top:558.4px;width:264.6px;height:20.4px;border:1px solid #dedede;border-radius:3px;background:#fff"></div>
  <div class="t" style="left:795.5px;top:563.8px;font-size:9.78px;color:#333">Report01 -- Summary of Key Properties.txt</div>
  <svg style="left:1034px;top:565.5px" width="10" height="6"><path d="M0.5 0.5 L5 5 L9.5 0.5" fill="none" stroke="#999" stroke-width="1"/></svg>

  <!-- DATA card -->
  <div class="card" style="left:780px;top:606.7px;width:283px;height:500px;border-radius:7px"></div>
  <div class="t" style="left:797.6px;top:633.5px;font-size:12.1px;color:#333">DATA</div>
  <div class="t" style="left:785.3px;top:669.8px;font-size:9.53px;color:#2b3d92">SELECT ALL</div>
  <div class="t" style="left:855.7px;top:669.8px;font-size:9.64px;color:#2b3d92">DESELECT ALL</div>
  <div class="t" style="left:1017.6px;top:669.8px;font-size:8.75px;color:#2b3d92">FILTER</div>
  <div class="a" style="left:789.3px;top:684.7px;width:264.7px;height:500px;border:1px solid #ebebeb;background:#fdfdfd"></div>
  <div class="a" style="left:793.5px;top:691.7px;width:247.1px;height:70.0px;border:1px solid #f1a57c;border-radius:5px;background:#e9eef2"></div>
  <div class="a" style="left:853.5px;top:696px;width:113.2px;height:1.5px;background:#f0b590"></div>
  <div class="t" style="left:798.2px;top:700.0px;font-size:8.4px;font-weight:bold;color:#111">SALT</div>
  <div class="t" style="left:935.5px;width:100px;text-align:right;top:700.0px;font-size:8.9px;font-weight:bold;color:#111">20.00 °C</div>
  <div class="t" style="left:798.2px;top:715.5px;font-size:9.2px;color:#444">LiPF<span style="font-size:6px;vertical-align:-2px">6</span></div>
  <div class="t" style="left:798.2px;top:730.7px;font-size:8.43px;font-weight:bold;color:#111">SOLVENTS</div>
  <div class="t" style="left:798.2px;top:745.1px;font-size:9.19px;color:#444">0.4021 EC | 0.5979 EMC</div>
  <svg style="left:1019px;top:721.2px" width="13" height="13"><path d="M5.5 1.5 H1.5 V11.5 H11.5 V7.5" fill="none" stroke="#f0a57c" stroke-width="1.2"/><path d="M7 1.5 H11.5 V6 M11.5 1.5 L5.5 7.5" fill="none" stroke="#f0a57c" stroke-width="1.2"/></svg>
  <div class="a" style="left:793.5px;top:765.2px;width:247.1px;height:69.3px;border:1px solid #f1a57c;border-radius:5px;background:#e9eef2"></div>
  <div class="a" style="left:853.5px;top:769.5px;width:113.2px;height:1.5px;background:#f0b590"></div>
  <div class="t" style="left:798.2px;top:773.5px;font-size:8.4px;font-weight:bold;color:#111">SALT</div>
  <div class="t" style="left:935.5px;width:100px;text-align:right;top:773.5px;font-size:8.9px;font-weight:bold;color:#111">20.00 °C</div>
  <div class="t" style="left:798.2px;top:789.0px;font-size:9.2px;color:#444">LiPF<span style="font-size:6px;vertical-align:-2px">6</span></div>
  <div class="t" style="left:798.2px;top:804.2px;font-size:8.43px;font-weight:bold;color:#111">SOLVENTS</div>
  <div class="t" style="left:798.2px;top:818.6px;font-size:9.19px;color:#444">0.6107 EC | 0.3893 EMC</div>
  <svg style="left:1019px;top:794.7px" width="13" height="13"><path d="M5.5 1.5 H1.5 V11.5 H11.5 V7.5" fill="none" stroke="#f0a57c" stroke-width="1.2"/><path d="M7 1.5 H11.5 V6 M11.5 1.5 L5.5 7.5" fill="none" stroke="#f0a57c" stroke-width="1.2"/></svg>
  <div class="a" style="left:793.5px;top:838px;width:247.1px;height:69.5px;border:1px solid #f1a57c;border-radius:5px;background:#e9eef2"></div>
  <div class="a" style="left:853.5px;top:842.5px;width:113.2px;height:1.5px;background:#f0b590"></div>
  <div class="t" style="left:798.2px;top:846.3px;font-size:8.4px;font-weight:bold;color:#111">SALT</div>
  <div class="t" style="left:935.5px;width:100px;text-align:right;top:846.3px;font-size:8.9px;font-weight:bold;color:#111">20.00 °C</div>
  <div class="t" style="left:798.2px;top:861.8px;font-size:9.2px;color:#444">LiPF<span style="font-size:6px;vertical-align:-2px">6</span></div>
  <div class="t" style="left:798.2px;top:877.0px;font-size:8.43px;font-weight:bold;color:#111">SOLVENTS</div>
  <div class="t" style="left:798.2px;top:891.4px;font-size:9.19px;color:#444">0.7854 EC | 0.2145 EMC</div>
  <svg style="left:1019px;top:867.5px" width="13" height="13"><path d="M5.5 1.5 H1.5 V11.5 H11.5 V7.5" fill="none" stroke="#f0a57c" stroke-width="1.2"/><path d="M7 1.5 H11.5 V6 M11.5 1.5 L5.5 7.5" fill="none" stroke="#f0a57c" stroke-width="1.2"/></svg>

  <!-- Chart card -->
  <div class="card" style="left:1072.2px;top:302.9px;width:900px;height:800px;border-radius:7px"></div>
  <div class="t" style="left:1089.7px;top:330px;font-size:12.15px;color:#333">COMPARE DATA VISUALIZATION</div>
  <div class="a" style="left:1090.1px;top:360.5px;width:153.4px;height:20.2px;border:1px solid #dedede;border-radius:3px;background:#fff"></div>
  <div class="t" style="left:1096.4px;top:365.6px;font-size:10px;color:#333">m2</div>
  <svg style="left:1224.5px;top:367.5px" width="10" height="6"><path d="M0.5 0.5 L5 5 L9.5 0.5" fill="none" stroke="#999" stroke-width="1"/></svg>
  <div class="t" style="left:1104.3px;top:384.5px;font-size:9.42px;color:#333">Independent Variable (X-Axis)</div>
  <div class="a" style="left:1257.6px;top:360.5px;width:154.7px;height:20.2px;border:1px solid #dedede;border-radius:3px;background:#fff"></div>
  <div class="t" style="left:1264.3px;top:365.8px;font-size:9.31px;color:#333">Spec. Cond. (mS/cm)</div>
  <svg style="left:1392.5px;top:367.5px" width="10" height="6"><path d="M0.5 0.5 L5 5 L9.5 0.5" fill="none" stroke="#999" stroke-width="1"/></svg>
  <div class="t" style="left:1276px;top:384.5px;font-size:9.42px;color:#333">Dependent Variable (Y-Axis)</div>
  <div class="a" style="left:1426px;top:360.5px;width:72.7px;height:20.2px;border:1px solid #dedede;border-radius:3px;background:#fff"></div>
  <div class="t" style="left:1432.7px;top:365.5px;font-size:11.39px;color:#222">Import Data</div>
  <div class="t" style="left:1470.2px;top:403.8px;font-size:16.84px;color:#333">m2 over Spec. Cond. (mS/cm)</div>
  <svg style="left:1708.5px;top:402.7px" width="16" height="16"><path d="M6.5 1.5 H1.5 V14.5 H14.5 V9.5" fill="none" stroke="#1b2a6b" stroke-width="1.7"/><path d="M8.5 1.5 H14.5 V7.5 M14.5 1.5 L7.5 8.5" fill="none" stroke="#1b2a6b" stroke-width="1.7"/></svg>
  <!-- chart -->
  <svg style="left:0;top:0" width="1938" height="1029">
    <path d="M1207.6 463.3 V958 H1940" fill="none" stroke="#555" stroke-width="1.3"/>
    <path d="M1207.7 930.1 L1208.3 924.5 L1208.9 918.8 L1209.5 913.2 L1210.1 907.6 L1210.7 902.0 L1211.4 896.4 L1212.0 890.8 L1212.7 885.2 L1213.3 879.6 L1214.0 874.1 L1214.7 868.5 L1215.4 863.0 L1216.1 857.5 L1216.8 852.0 L1217.5 846.4 L1218.2 840.9 L1219.0 835.4 L1219.8 830.0 L1220.5 824.5 L1221.3 819.0 L1222.1 813.5 L1223.0 808.1 L1223.8 802.6 L1224.6 797.2 L1225.5 791.7 L1226.4 786.3 L1227.2 780.9 L1228.1 775.4 L1229.1 770.0 L1230.0 764.6 L1230.9 759.2 L1231.9 753.8 L1232.9 748.3 L1233.9 742.9 L1234.9 737.5 L1235.9 732.1 L1237.0 726.7 L1238.0 721.3 L1239.1 715.9 L1240.2 710.5 L1241.3 705.1 L1242.4 699.7 L1243.6 694.3 L1244.8 689.0 L1245.9 683.6 L1247.1 678.2 L1248.4 672.8 L1249.6 667.4 L1250.9 662.0 L1252.2 656.6 L1253.5 651.2 L1254.8 645.8 L1256.1 640.3 L1257.5 634.9 L1258.9 629.5 L1260.3 624.1 L1261.7 618.7 L1263.1 613.3 L1264.6 607.8 L1266.1 602.4 L1267.6 597.0 L1269.2 591.5 L1270.8 586.1 L1272.5 580.8 L1274.2 575.4 L1276.0 570.0 L1277.8 564.7 L1279.7 559.5 L1281.7 554.2 L1283.8 549.0 L1286.0 543.9 L1288.3 538.8 L1290.7 533.7 L1293.2 528.8 L1295.9 523.8 L1298.6 519.0 L1301.5 514.2 L1304.5 509.5 L1307.7 504.9 L1311.0 500.4 L1314.5 495.9 L1318.1 491.6 L1321.9 487.4 L1325.8 483.3 L1329.9 479.5 L1334.2 475.9 L1338.6 472.7 L1343.1 469.9 L1347.7 467.6 L1352.5 465.8 L1357.3 464.6 L1362.3 464.0 L1367.3 464.1 L1372.4 464.8 L1377.6 466.0 L1382.8 467.7 L1387.9 469.9 L1393.0 472.4 L1398.0 475.2 L1403.0 478.2 L1407.8 481.4 L1412.5 484.8 L1417.0 488.2 L1421.5 491.8 L1425.8 495.5 L1429.9 499.3 L1434.0 503.1 L1437.9 507.1 L1441.8 511.1 L1445.5 515.3 L1449.2 519.5 L1452.7 523.8 L1456.2 528.1 L1459.6 532.5 L1462.9 537.0 L1466.2 541.5 L1469.4 546.1 L1472.6 550.7 L1475.7 555.3 L1478.7 560.0 L1481.7 564.7 L1484.7 569.5 L1487.7 574.2 L1490.6 579.0 L1493.5 583.7 L1496.5 588.5 L1499.4 593.3 L1502.3 598.0 L1505.2 602.8 L1508.1 607.5 L1511.0 612.2 L1513.9 617.0 L1516.9 621.7 L1519.8 626.4 L1522.7 631.1 L1525.7 635.8 L1528.6 640.5 L1531.6 645.1 L1534.5 649.8 L1537.5 654.5 L1540.5 659.2 L1543.5 663.8 L1546.5 668.5 L1549.5 673.1 L1552.5 677.7 L1555.5 682.4 L1558.5 687.0 L1561.6 691.6 L1564.6 696.2 L1567.7 700.8 L1570.8 705.5 L1573.9 710.1 L1577.0 714.7 L1580.1 719.3 L1583.2 723.8 L1586.4 728.4 L1589.5 733.0 L1592.7 737.6 L1595.9 742.1 L1599.1 746.7 L1602.4 751.2 L1605.6 755.7 L1608.9 760.2 L1612.2 764.7 L1615.5 769.2 L1618.9 773.6 L1622.3 778.1 L1625.7 782.5 L1629.1 786.8 L1632.6 791.2 L1636.1 795.5 L1639.6 799.8 L1643.2 804.0 L1646.8 808.3 L1650.5 812.4 L1654.1 816.6 L1657.9 820.7 L1661.6 824.8 L1665.4 828.8 L1669.3 832.8 L1673.2 836.7 L1677.1 840.6 L1681.1 844.5 L1685.1 848.3 L1689.2 852.1 L1703.6 863.9 L1729.5 884.6 L1753.9 900.0 L1773.3 910.5 L1782.2 911.6 L1791.0 916.7 L1799.9 919.0 L1830.0 930.6 L1843.7 935.6 L1890.0 945.0 L1940.0 951.5" fill="none" stroke="#ec9163" stroke-width="1.45" stroke-linejoin="round"/>
    <path d="M1207.7 930.1 L1208.2 924.6 L1208.7 919.1 L1209.2 913.6 L1209.8 908.2 L1210.3 902.7 L1210.9 897.3 L1211.5 891.9 L1212.2 886.5 L1212.8 881.1 L1213.5 875.7 L1214.2 870.3 L1214.9 865.0 L1215.6 859.6 L1216.3 854.3 L1217.1 849.0 L1217.9 843.7 L1218.7 838.4 L1219.5 833.1 L1220.3 827.8 L1221.1 822.5 L1222.0 817.2 L1222.9 812.0 L1223.8 806.7 L1224.7 801.5 L1225.6 796.2 L1226.5 791.0 L1227.5 785.8 L1228.4 780.6 L1229.4 775.3 L1230.4 770.1 L1231.4 764.9 L1232.4 759.7 L1233.5 754.5 L1234.5 749.3 L1235.6 744.1 L1236.7 738.9 L1237.7 733.7 L1238.8 728.5 L1240.0 723.3 L1241.1 718.1 L1242.2 712.9 L1243.4 707.7 L1244.5 702.5 L1245.7 697.3 L1246.9 692.0 L1248.1 686.8 L1249.3 681.6 L1250.5 676.4 L1251.7 671.2 L1252.9 665.9 L1254.2 660.7 L1255.4 655.5 L1256.7 650.2 L1257.9 645.0 L1259.2 639.7 L1260.5 634.4 L1261.8 629.1 L1263.1 623.9 L1264.4 618.6 L1265.7 613.3 L1267.0 607.9 L1268.4 602.6 L1269.7 597.3 L1271.1 592.0 L1272.6 586.7 L1274.0 581.4 L1275.6 576.2 L1277.2 571.0 L1278.9 565.8 L1280.6 560.7 L1282.5 555.6 L1284.5 550.6 L1286.5 545.7 L1288.7 540.8 L1291.1 536.0 L1293.5 531.3 L1296.1 526.7 L1298.9 522.2 L1301.8 517.8 L1304.9 513.5 L1308.2 509.3 L1311.7 505.3 L1315.4 501.4 L1319.2 497.6 L1323.3 494.0 L1327.6 490.6 L1332.0 487.5 L1336.6 484.7 L1341.2 482.3 L1346.0 480.3 L1350.9 478.8 L1355.8 477.9 L1360.7 477.6 L1365.7 477.9 L1370.6 478.8 L1375.6 480.2 L1380.5 482.1 L1385.4 484.4 L1390.3 487.1 L1395.1 490.0 L1399.8 493.2 L1404.5 496.5 L1409.1 499.9 L1413.6 503.4 L1417.9 506.9 L1422.2 510.4 L1426.4 514.0 L1430.5 517.7 L1434.6 521.3 L1438.6 525.1 L1442.5 528.8 L1446.3 532.6 L1450.0 536.4 L1453.7 540.3 L1457.4 544.2 L1461.0 548.1 L1464.5 552.0 L1468.1 556.0 L1471.5 560.0 L1475.0 564.0 L1478.3 568.1 L1481.7 572.1 L1485.1 576.2 L1488.4 580.3 L1491.7 584.5 L1495.0 588.6 L1498.3 592.7 L1501.6 596.9 L1504.8 601.1 L1508.1 605.3 L1511.4 609.5 L1514.7 613.7 L1518.0 617.9 L1521.3 622.2 L1524.6 626.4 L1527.8 630.6 L1531.1 634.9 L1534.4 639.1 L1537.7 643.4 L1541.0 647.7 L1544.3 651.9 L1547.6 656.2 L1551.0 660.4 L1554.3 664.7 L1557.6 669.0 L1560.9 673.2 L1564.2 677.5 L1567.6 681.8 L1570.9 686.0 L1574.3 690.3 L1577.6 694.5 L1581.0 698.8 L1584.4 703.0 L1587.7 707.2 L1591.1 711.5 L1594.5 715.7 L1597.9 719.9 L1601.3 724.1 L1604.7 728.2 L1608.2 732.4 L1611.6 736.6 L1615.1 740.7 L1618.5 744.8 L1622.0 748.9 L1625.5 753.0 L1629.0 757.1 L1632.5 761.1 L1636.1 765.2 L1639.7 769.2 L1643.3 773.2 L1646.9 777.1 L1650.5 781.0 L1654.2 784.9 L1657.9 788.8 L1661.6 792.6 L1665.4 796.4 L1669.2 800.2 L1673.0 803.9 L1676.9 807.6 L1680.8 811.3 L1684.7 814.9 L1688.6 818.5 L1711.8 838.1 L1736.3 855.1 L1749.9 863.9 L1764.8 873.7 L1773.3 872.4 L1782.2 879.2 L1791.0 880.5 L1799.9 885.4 L1830.0 896.9 L1860.8 907.1 L1900.0 916.0 L1940.0 923.2" fill="none" stroke="#ec9163" stroke-width="1.45" stroke-linejoin="round"/>
    <path d="M1207.7 930.1 L1208.0 924.9 L1208.3 919.7 L1208.6 914.6 L1209.0 909.4 L1209.4 904.4 L1209.9 899.3 L1210.3 894.3 L1210.8 889.3 L1211.4 884.4 L1211.9 879.5 L1212.5 874.6 L1213.1 869.7 L1213.7 864.9 L1214.4 860.1 L1215.1 855.3 L1215.8 850.6 L1216.5 845.8 L1217.3 841.1 L1218.0 836.4 L1218.8 831.7 L1219.7 827.1 L1220.5 822.4 L1221.4 817.8 L1222.3 813.1 L1223.2 808.5 L1224.1 803.9 L1225.1 799.3 L1226.0 794.8 L1227.0 790.2 L1228.0 785.6 L1229.0 781.1 L1230.1 776.5 L1231.1 771.9 L1232.2 767.4 L1233.3 762.8 L1234.4 758.3 L1235.6 753.7 L1236.7 749.1 L1237.8 744.6 L1239.0 740.0 L1240.2 735.4 L1241.4 730.8 L1242.6 726.2 L1243.8 721.6 L1245.0 717.0 L1246.3 712.3 L1247.5 707.7 L1248.8 703.0 L1250.1 698.3 L1251.3 693.6 L1252.6 688.9 L1253.9 684.2 L1255.2 679.4 L1256.5 674.6 L1257.9 669.8 L1259.2 664.9 L1260.5 660.1 L1261.9 655.2 L1263.3 650.4 L1264.7 645.5 L1266.2 640.6 L1267.7 635.8 L1269.2 631.0 L1270.8 626.2 L1272.5 621.5 L1274.2 616.8 L1276.0 612.2 L1277.9 607.6 L1279.8 603.1 L1281.9 598.7 L1284.0 594.3 L1286.3 590.0 L1288.6 585.9 L1291.1 581.8 L1293.7 577.9 L1296.4 574.0 L1299.2 570.3 L1302.2 566.7 L1305.3 563.3 L1308.6 560.0 L1312.0 556.8 L1315.6 553.9 L1319.3 551.0 L1323.2 548.4 L1327.3 546.0 L1331.5 543.8 L1335.8 541.9 L1340.2 540.3 L1344.7 539.0 L1349.3 538.2 L1353.9 537.7 L1358.6 537.7 L1363.3 538.0 L1368.0 538.7 L1372.7 539.7 L1377.3 541.1 L1382.0 542.6 L1386.5 544.4 L1391.0 546.3 L1395.4 548.4 L1399.8 550.6 L1404.0 553.0 L1408.2 555.4 L1412.3 558.0 L1416.4 560.7 L1420.4 563.4 L1424.3 566.2 L1428.2 569.1 L1432.1 572.1 L1435.9 575.1 L1439.7 578.2 L1443.5 581.3 L1447.2 584.4 L1451.0 587.6 L1454.7 590.8 L1458.4 593.9 L1462.0 597.1 L1465.7 600.3 L1469.4 603.5 L1473.0 606.7 L1476.7 610.0 L1480.3 613.2 L1483.9 616.4 L1487.5 619.7 L1491.1 623.0 L1494.7 626.2 L1498.3 629.5 L1501.8 632.8 L1505.4 636.1 L1508.9 639.4 L1512.5 642.7 L1516.0 646.0 L1519.6 649.3 L1523.1 652.6 L1526.6 655.9 L1530.1 659.2 L1533.6 662.5 L1537.1 665.9 L1540.7 669.2 L1544.2 672.5 L1547.7 675.9 L1551.2 679.2 L1554.7 682.5 L1558.2 685.8 L1561.6 689.2 L1565.1 692.5 L1568.6 695.8 L1572.1 699.1 L1575.6 702.5 L1579.1 705.8 L1582.6 709.1 L1586.2 712.4 L1589.7 715.7 L1593.2 719.0 L1596.7 722.3 L1600.2 725.6 L1603.8 728.8 L1607.3 732.1 L1610.8 735.4 L1614.4 738.6 L1617.9 741.9 L1621.5 745.1 L1625.1 748.4 L1628.6 751.6 L1632.2 754.8 L1635.8 758.0 L1639.4 761.2 L1643.0 764.4 L1646.7 767.6 L1650.3 770.7 L1654.0 773.9 L1657.6 777.0 L1661.3 780.1 L1665.0 783.2 L1668.7 786.3 L1672.4 789.4 L1676.1 792.4 L1679.9 795.5 L1683.6 798.5 L1687.4 801.5 L1719.9 825.9 L1747.1 846.0 L1764.8 855.8 L1773.3 860.3 L1782.2 857.4 L1791.0 864.4 L1799.9 864.2 L1808.4 866.9 L1816.5 870.7 L1830.0 874.8 L1869.4 886.4 L1914.2 895.4 L1940.0 898.5" fill="none" stroke="#ec9163" stroke-width="1.45" stroke-linejoin="round"/>
  </svg>
  <div class="t" style="left:1152.7px;width:50px;text-align:right;top:500.4px;font-size:8.6px;color:#333">8.00</div>
  <div class="t" style="left:1152.7px;width:50px;text-align:right;top:557.6px;font-size:8.6px;color:#333">7.00</div>
  <div class="t" style="left:1152.7px;width:50px;text-align:right;top:615.6px;font-size:8.6px;color:#333">6.00</div>
  <div class="t" style="left:1152.7px;width:50px;text-align:right;top:672.7px;font-size:8.6px;color:#333">5.00</div>
  <div class="t" style="left:1152.7px;width:50px;text-align:right;top:730.7px;font-size:8.6px;color:#333">4.00</div>
  <div class="t" style="left:1152.7px;width:50px;text-align:right;top:788.4px;font-size:8.6px;color:#333">3.00</div>
  <div class="t" style="left:1152.7px;width:50px;text-align:right;top:846.3px;font-size:8.6px;color:#333">2.00</div>
  <div class="t" style="left:1152.7px;width:50px;text-align:right;top:904.3px;font-size:8.6px;color:#333">1.00</div>
  <div class="t" style="left:1266.0px;width:50px;text-align:center;top:963.4px;font-size:8.6px;color:#333">0.5</div>
  <div class="t" style="left:1353.7px;width:50px;text-align:center;top:963.4px;font-size:8.6px;color:#333">1.0</div>
  <div class="t" style="left:1441.7px;width:50px;text-align:center;top:963.4px;font-size:8.6px;color:#333">1.5</div>
  <div class="t" style="left:1529.0px;width:50px;text-align:center;top:963.4px;font-size:8.6px;color:#333">2.0</div>
  <div class="t" style="left:1616.4px;width:50px;text-align:center;top:963.4px;font-size:8.6px;color:#333">2.5</div>
  <div class="t" style="left:1704.4px;width:50px;text-align:center;top:963.4px;font-size:8.6px;color:#333">3.0</div>
  <div class="t" style="left:1792.9px;width:50px;text-align:center;top:963.4px;font-size:8.6px;color:#333">3.5</div>
  <div class="t" style="left:1879.9px;width:50px;text-align:center;top:963.4px;font-size:8.6px;color:#333">4.0</div>
  <div class="t" style="left:1614px;width:50px;text-align:center;top:990.3px;font-size:10.5px;color:#333">m2</div>
  <div class="t" style="left:1104px;width:120px;text-align:center;top:706.3px;font-size:10.2px;letter-spacing:.35px;color:#333;transform:rotate(-90deg)">Spec. Cond. (mS/cm)</div>

  <!-- tooltip -->
  <div class="a" style="left:1385px;top:427px;width:178px;height:73px;border:1px solid #f4b995;border-radius:2px;background:#fff"></div>
  <div class="t" style="left:1401.2px;top:441.2px;font-size:8.75px;color:#222;line-height:11.9px">Temperature: 20.00C<br>Salt: LiPF6<br>Solvents: 0.40206 EC | 0.59794 EMC<br>m2: 0.95, Spec. Cond. (mS/cm): 8.71</div>
  <div id="w2c"></div>
</div></div>
</body></html>
